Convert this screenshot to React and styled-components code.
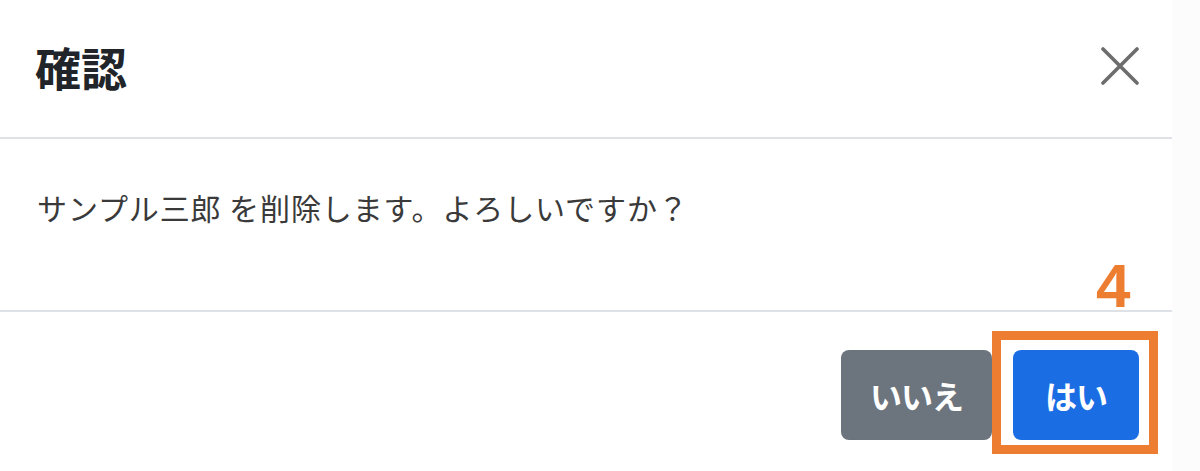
import React from 'react';
import styled, { createGlobalStyle } from 'styled-components';

const GlobalStyle = createGlobalStyle`
body {
  margin: 0;
  background: #fcfcfc;
  font-family: 'Noto Sans CJK JP', 'Noto Sans', sans-serif;
}
`;

const Modal = styled.div`
position: relative;
width: 1172px;
height: 471px;
background: #fff;
`;

const Header = styled.div`
display: flex;
justify-content: space-between;
align-items: center;
height: 139px;
box-sizing: border-box;
padding: 0 33px 6px 35px;
border-bottom: 2px solid #dee2e6;
`;

const Title = styled.h5`
margin: 0;
font-size: 46px;
font-weight: 700;
line-height: 1;
color: #212529;
`;

const CloseButton = styled.button`
display: flex;
padding: 0;
border: none;
background: none;
cursor: pointer;
`;

const Body = styled.div`
height: 173px;
box-sizing: border-box;
padding: 46px 37px 0;
border-bottom: 2px solid #dee2e6;
`;

const Message = styled.p`
margin: 0;
font-size: 30px;
line-height: 45px;
letter-spacing: 0.9px;
color: #3a3a3a;
`;

const Footer = styled.div`
display: flex;
justify-content: flex-end;
gap: 21px;
padding: 38px 33px 0 0;
`;

const Button = styled.button`
width: ${p => p.$width}px;
height: 90px;
border: none;
border-radius: 8px;
background: ${p => p.$bg};
color: #fff;
font-family: 'Noto Sans CJK JP', 'Noto Sans', sans-serif;
font-size: 32px;
font-weight: 700;
letter-spacing: -1px;
padding: 0;
`;

const Highlight = styled.div`
position: absolute;
left: 992px;
top: 331px;
width: 166px;
height: 123px;
box-sizing: border-box;
border: 9px solid #ed7d31;
pointer-events: none;
`;

const StepNumber = styled.div`
position: absolute;
left: 1096px;
top: 255px;
font-family: 'Liberation Sans', Arial, sans-serif;
font-size: 62px;
font-weight: 700;
line-height: 1;
color: #ed7d31;
`;

const App = () => {
  return (
    <>
      <GlobalStyle />
      <Modal>
        <Header>
          <Title>確認</Title>
          <CloseButton aria-label="閉じる">
            <svg width="38" height="38" viewBox="0 0 38 38">
              <path d="M2 2L36 36M36 2L2 36" stroke="#6c6c6c" strokeWidth="3.6" strokeLinecap="round" />
            </svg>
          </CloseButton>
        </Header>
        <Body>
          <Message>サンプル三郎 を削除します。よろしいですか？</Message>
        </Body>
        <Footer>
          <Button $width={151} $bg="#6c757d">いいえ</Button>
          <Button $width={126} $bg="#1a6de3">はい</Button>
        </Footer>
        <StepNumber>4</StepNumber>
        <Highlight />
      </Modal>
    </>
  );
};

export default App;
